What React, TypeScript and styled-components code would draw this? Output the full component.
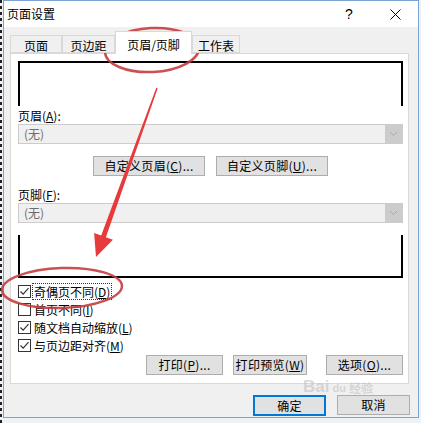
import styled, { createGlobalStyle } from 'styled-components'

const GlobalStyle = createGlobalStyle`
  html, body { margin: 0; padding: 0; }
  body {
    font-family: "Noto Sans CJK SC", "Microsoft YaHei", sans-serif;
    font-size: 12px;
    color: #000;
  }
  * { box-sizing: border-box; }
`

const Screen = styled.div`
  position: relative;
  width: 421px;
  height: 423px;
  overflow: hidden;
  padding-left: 3px;
  background-color: #eef2f6;
  background-image: repeating-linear-gradient(to bottom, #222 0 3px, transparent 3px 6px);
  background-size: 2px 100%;
  background-repeat: no-repeat;
`

const Dialog = styled.div`
  width: 416px;
  height: 418px;
  border: 1px solid #7ba2d2;
  display: flex;
  flex-direction: column;
  background: #f0f0f0;
`

const TitleBar = styled.div`
  height: 26px;
  background: #fff;
  display: flex;
  align-items: center;
  padding-left: 3px;
`

const Title = styled.div`
  flex: 1;
  font-size: 12px;
  line-height: 16px;
`

const CaptionButton = styled.div`
  width: 46px;
  height: 26px;
  display: flex;
  align-items: center;
  justify-content: center;
  font-family: "Liberation Sans", sans-serif;
  font-size: 14px;
`

const Body = styled.div`
  flex: 1;
  padding: 3px 9px 0 6px;
  display: flex;
  flex-direction: column;
`

const TabStrip = styled.div`
  height: 23px;
  display: flex;
  align-items: flex-end;
`

const Tab = styled.div<{ $w: number; $active?: boolean }>`
  width: ${(p) => p.$w}px;
  height: ${(p) => (p.$active ? 23 : 18)}px;
  padding-top: ${(p) => (p.$active ? 5 : 2)}px;
  margin-bottom: ${(p) => (p.$active ? -1 : 0)}px;
  background: ${(p) => (p.$active ? '#fff' : '#f0f0f0')};
  border: 1px solid #d9d9d9;
  border-bottom: ${(p) => (p.$active ? 'none' : '1px solid #d9d9d9')};
  position: relative;
  z-index: ${(p) => (p.$active ? 2 : 1)};
  text-align: center;
  line-height: 16px;
  font-size: 12px;
`

const Panel = styled.div`
  height: 331px;
  background: #fff;
  border: 1px solid #d9d9d9;
  padding: 7px 5px 0 7px;
  display: flex;
  flex-direction: column;
`

const Preview = styled.div<{ $top?: boolean }>`
  height: ${(p) => (p.$top ? 45 : 43)}px;
  margin-top: ${(p) => (p.$top ? 0 : 12)}px;
  border: 2px solid #000;
  border-bottom-width: ${(p) => (p.$top ? 0 : 2)}px;
  border-top-width: ${(p) => (p.$top ? 2 : 0)}px;
  background: #fff;
`

const FieldLabel = styled.div<{ $mt: number }>`
  margin-top: ${(p) => p.$mt}px;
  height: 17px;
  line-height: 17px;
  font-size: 12px;
`

const Select = styled.div`
  height: 20px;
  width: 385px;
  border: 1px solid #cccccc;
  background: #f0f0f0;
  display: flex;
  align-items: center;
  color: #6d6d6d;
  padding-left: 5px;
`

const SelectText = styled.div`
  flex: 1;
  line-height: 16px;
`

const DropButton = styled.div`
  width: 17px;
  height: 18px;
  background: #cccccc;
  display: flex;
  align-items: center;
  justify-content: center;
`

const ButtonRow = styled.div<{ $mt: number; $justify: string }>`
  margin-top: ${(p) => p.$mt}px;
  display: flex;
  justify-content: ${(p) => p.$justify};
  gap: 11px;
`

const Button = styled.div<{ $w: number; $ml?: number; $default?: boolean }>`
  width: ${(p) => p.$w}px;
  height: ${(p) => (p.$default ? 21 : 20)}px;
  margin-left: ${(p) => p.$ml ?? 0}px;
  background: #e1e1e1;
  border: ${(p) => (p.$default ? '2px solid #0078d7' : '1px solid #adadad')};
  display: flex;
  align-items: center;
  justify-content: center;
  font-size: 12px;
  line-height: 16px;
  white-space: nowrap;
  letter-spacing: 0.3px;
`

const CheckList = styled.div`
  margin-top: 4px;
  display: flex;
  flex-direction: column;
`

const CheckRow = styled.div`
  height: 18px;
  display: flex;
  align-items: center;
`

const Box = styled.div`
  width: 13px;
  height: 13px;
  border: 1px solid #333;
  background: #fff;
  display: flex;
  align-items: center;
  justify-content: center;
`

const CheckLabel = styled.span<{ $focus?: boolean }>`
  margin-left: 2px;
  padding: 0 1px;
  line-height: 15px;
  outline: ${(p) => (p.$focus ? '1px dotted #333' : 'none')};
  font-size: 12px;
`

const Footer = styled.div`
  margin-top: 11px;
  display: flex;
  justify-content: flex-end;
  gap: 11px;
  margin-right: -1px;
`

const Overlay = styled.svg`
  position: absolute;
  left: 0;
  top: 0;
  pointer-events: none;
`

const Watermark = styled.div`
  position: absolute;
  left: 303px;
  top: 379px;
  height: 15px;
  display: flex;
  align-items: flex-end;
  gap: 3px;
  color: rgba(185, 185, 185, 0.5);
  font-family: "Liberation Sans", sans-serif;
  font-weight: bold;
  pointer-events: none;
`

const WmBig = styled.span`
  font-size: 17px;
  line-height: 15px;
`

const WmSmall = styled.span<{ $cjk?: boolean }>`
  font-size: ${(p) => (p.$cjk ? 12 : 11)}px;
  line-height: 12px;
  font-family: ${(p) => (p.$cjk ? '"Noto Sans CJK SC", sans-serif' : '"Liberation Sans", sans-serif')};
`

const checks = [
  { label: '奇偶页不同', key: 'D', checked: true, focus: true },
  { label: '首页不同', key: 'I', checked: false },
  { label: '随文档自动缩放', key: 'L', checked: true },
  { label: '与页边距对齐', key: 'M', checked: true },
]

const tabs = [
  { label: '页面', w: 52 },
  { label: '页边距', w: 53 },
  { label: '页眉/页脚', w: 77, active: true },
  { label: '工作表', w: 48 },
]

const Chevron = () => (
  <svg width="9" height="6" viewBox="0 0 9 6">
    <polyline points="1,1 4.5,4.5 8,1" fill="none" stroke="#a8a8a8" strokeWidth="1" />
  </svg>
)

const Check = () => (
  <svg width="11" height="11" viewBox="0 0 11 11">
    <polyline points="1.5,5.5 4.2,8.2 9.5,2.2" fill="none" stroke="#333" strokeWidth="1.2" />
  </svg>
)

export default function App() {
  // red arrow from (157,88) down to its tip at (96,257)
  const arrow = '157.7,88.2 156.3,87.8 101.2,235.4 94.1,232.9 96,257 112.9,239.7 105.9,237.2'

  return (
    <Screen>
      <GlobalStyle />
      <Dialog>
        <TitleBar>
          <Title>页面设置</Title>
          <CaptionButton>?</CaptionButton>
          <CaptionButton>
            <svg width="11" height="11" viewBox="0 0 11 11">
              <line x1="0.5" y1="0.5" x2="10.5" y2="10.5" stroke="#000" strokeWidth="1" />
              <line x1="10.5" y1="0.5" x2="0.5" y2="10.5" stroke="#000" strokeWidth="1" />
            </svg>
          </CaptionButton>
        </TitleBar>
        <Body>
          <TabStrip>
            {tabs.map((t) => (
              <Tab key={t.label} $w={t.w} $active={t.active}>
                {t.label}
              </Tab>
            ))}
          </TabStrip>
          <Panel>
            <Preview $top />
            <FieldLabel $mt={1}>
              页眉(<u>A</u>):
            </FieldLabel>
            <Select>
              <SelectText>(无)</SelectText>
              <DropButton>
                <Chevron />
              </DropButton>
            </Select>
            <ButtonRow $mt={12} $justify="center">
              <Button $w={112}>
                自定义页眉(<u>C</u>)...
              </Button>
              <Button $w={112}>
                自定义页脚(<u>U</u>)...
              </Button>
            </ButtonRow>
            <FieldLabel $mt={10}>
              页脚(<u>F</u>):
            </FieldLabel>
            <Select>
              <SelectText>(无)</SelectText>
              <DropButton>
                <Chevron />
              </DropButton>
            </Select>
            <Preview />
            <CheckList>
              {checks.map((c) => (
                <CheckRow key={c.key}>
                  <Box>{c.checked && <Check />}</Box>
                  <CheckLabel $focus={c.focus}>
                    {c.label}(<u>{c.key}</u>)
                  </CheckLabel>
                </CheckRow>
              ))}
            </CheckList>
            <ButtonRow $mt={1} $justify="flex-end">
              <Button $w={77}>
                打印(<u>P</u>)...
              </Button>
              <Button $w={74} $ml={-1}>
                打印预览(<u>W</u>)
              </Button>
              <Button $w={77} $ml={8}>
                选项(<u>O</u>)...
              </Button>
            </ButtonRow>
          </Panel>
          <Footer>
            <Button $w={73} $default>
              确定
            </Button>
            <Button $w={73}>取消</Button>
          </Footer>
        </Body>
      </Dialog>

      <Watermark>
        <WmBig>Bai</WmBig>
        <WmSmall>du</WmSmall>
        <WmSmall $cjk>经验</WmSmall>
      </Watermark>

      <Overlay width="421" height="423" viewBox="0 0 421 423">
        <ellipse
          cx="152"
          cy="50"
          rx="47"
          ry="22"
          fill="none"
          stroke="#c43d3f"
          strokeWidth="2.5"
          opacity="0.9"
          transform="rotate(-3 152 50)"
        />
        <polygon points={arrow} fill="#e83a3b" />
        <ellipse
          cx="62"
          cy="288"
          rx="60"
          ry="20"
          fill="none"
          stroke="#c43d3f"
          strokeWidth="2.5"
          opacity="0.9"
          transform="rotate(-2 62 288)"
        />
      </Overlay>
    </Screen>
  )
}
